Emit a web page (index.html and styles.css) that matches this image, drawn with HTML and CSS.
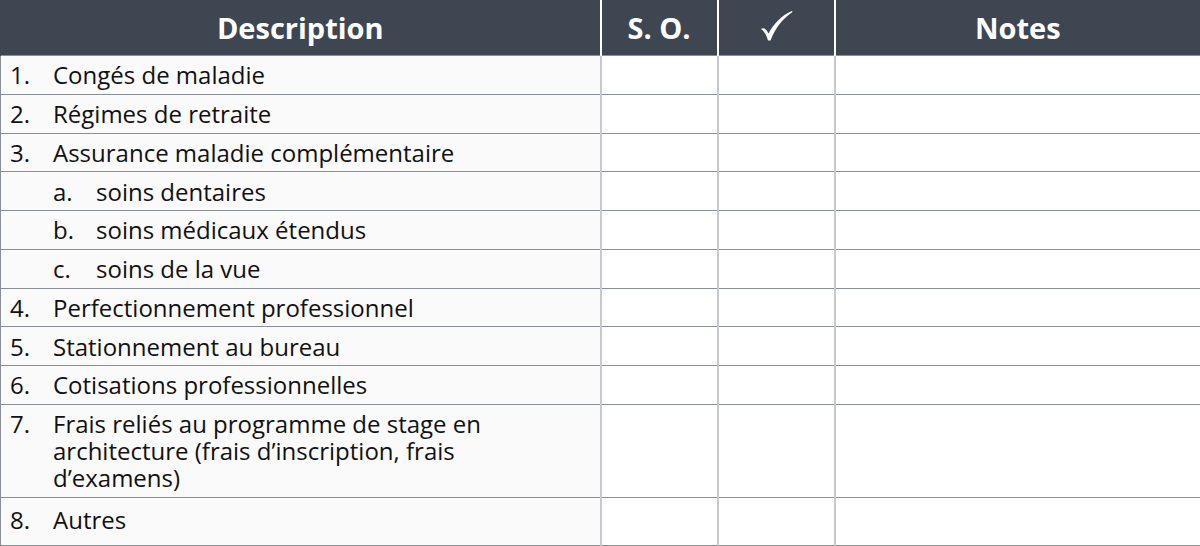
FILE: index.html
```html
<!DOCTYPE html>
<html lang="fr">
<head>
<meta charset="utf-8">
<link rel="stylesheet" href="styles.css">
</head>
<body>
<table class="checklist">
  <colgroup>
    <col class="c-desc"><col class="c-so"><col class="c-check"><col class="c-notes">
  </colgroup>
  <thead>
    <tr>
      <th>Description</th>
      <th>S. O.</th>
      <th><svg class="tick" width="38" height="34" viewBox="0 0 38 34"><path d="M3 20 C5 18.5 8 19 10.5 24.5 C15.5 15 24 6 34 2 L34.6 3 C25 9.5 17 19 12.6 31.5 L10 31.5 C8.5 26 6 22 3 20 Z" fill="#fff"/></svg></th>
      <th>Notes</th>
    </tr>
  </thead>
  <tbody>
    <tr><td class="desc"><div class="item"><span class="num">1.</span><span>Congés de maladie</span></div></td><td></td><td></td><td></td></tr>
    <tr><td class="desc"><div class="item"><span class="num">2.</span><span>Régimes de retraite</span></div></td><td></td><td></td><td></td></tr>
    <tr><td class="desc"><div class="item"><span class="num">3.</span><span>Assurance maladie complémentaire</span></div></td><td></td><td></td><td></td></tr>
    <tr><td class="desc"><div class="item sub"><span class="num">a.</span><span>soins dentaires</span></div></td><td></td><td></td><td></td></tr>
    <tr><td class="desc"><div class="item sub"><span class="num">b.</span><span>soins médicaux étendus</span></div></td><td></td><td></td><td></td></tr>
    <tr><td class="desc"><div class="item sub"><span class="num">c.</span><span>soins de la vue</span></div></td><td></td><td></td><td></td></tr>
    <tr><td class="desc"><div class="item"><span class="num">4.</span><span>Perfectionnement professionnel</span></div></td><td></td><td></td><td></td></tr>
    <tr><td class="desc"><div class="item"><span class="num">5.</span><span>Stationnement au bureau</span></div></td><td></td><td></td><td></td></tr>
    <tr><td class="desc"><div class="item"><span class="num">6.</span><span>Cotisations professionnelles</span></div></td><td></td><td></td><td></td></tr>
    <tr><td class="desc"><div class="item"><span class="num">7.</span><span class="wrap">Frais reliés au programme de stage en architecture (frais d’inscription, frais d’examens)</span></div></td><td></td><td></td><td></td></tr>
    <tr class="last"><td class="desc"><div class="item"><span class="num">8.</span><span>Autres</span></div></td><td></td><td></td><td></td></tr>
  </tbody>
</table>
</body>
</html>
```

FILE: styles.css
```css
html, body {
  margin: 0;
  padding: 0;
  background: #ffffff;
}

body {
  font-family: "Open Sans", "Noto Sans", "Liberation Sans", sans-serif;
  color: #111111;
}

.checklist {
  width: 1200px;
  border-collapse: collapse;
  table-layout: fixed;
}

.c-desc { width: 600px; }
.c-so { width: 117px; }
.c-check { width: 117px; }
.c-notes { width: 366px; }

.checklist th {
  height: 55px;
  padding: 0;
  background: #3d4651;
  color: #ffffff;
  font-weight: 700;
  font-size: 29px;
  line-height: 55px;
  text-align: center;
  vertical-align: middle;
  border-left: 2px solid #ffffff;
  box-sizing: border-box;
}

.checklist th:first-child {
  border-left: 1px solid #3d4651;
}

.checklist th:last-child {
  border-right: 1px solid #3d4651;
}

.tick {
  display: block;
  margin: 0 auto;
  position: relative;
  top: -2px;
  left: 1px;
}

.checklist td {
  padding: 5.3px 0 5.38px;
  border-top: 1px solid #8a8f96;
  border-left: 2px solid #c6cacf;
  vertical-align: top;
  font-size: 24px;
  line-height: 27.1px;
}

.checklist td:first-child {
  border-left: 1px solid #8a8f96;
}

.checklist td:last-child {
  border-right: 1px solid #8a8f96;
}

.checklist tr.last td {
  border-bottom: 1px solid #8a8f96;
  padding-top: 8.5px;
  padding-bottom: 12px;
}

.checklist td.desc {
  background: #fafafa;
}

.item {
  display: flex;
  padding-left: 9px;
}

.item.sub {
  padding-left: 52px;
}

.num {
  flex: 0 0 43px;
}

.wrap {
  max-width: 450px;
}
```
